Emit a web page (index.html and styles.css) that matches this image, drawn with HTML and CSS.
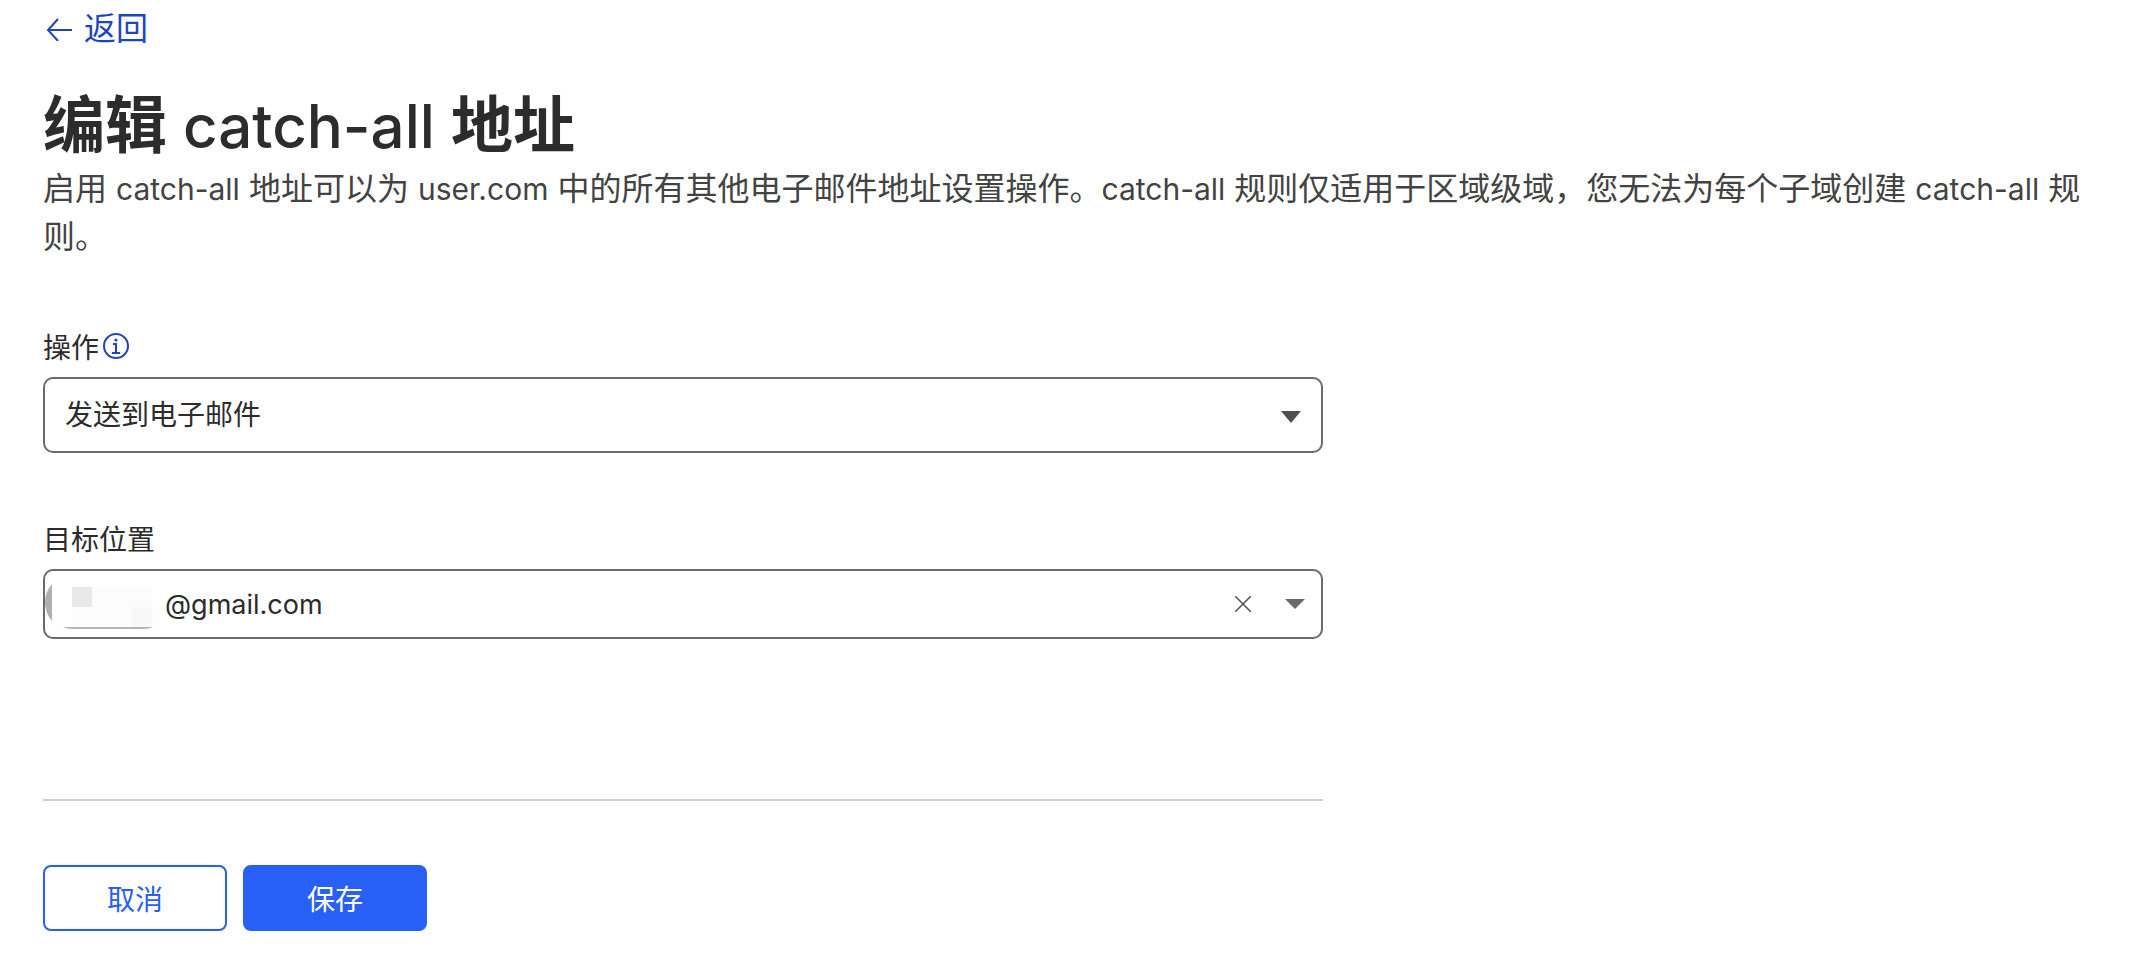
FILE: index.html
```html
<!DOCTYPE html>
<html lang="zh-CN">
<head>
    <meta charset="UTF-8">
    <meta name="viewport" content="width=device-width, initial-scale=1.0">
    <title>编辑 catch-all 地址</title>
    <link rel="stylesheet" href="styles.css">
</head>
<body>
    <main class="page">
        <a class="back-link" href="#">
            <svg class="back-icon" viewBox="0 0 26 24" aria-hidden="true">
                <path d="M26 13H2M12 2L2 13l10 11"/>
            </svg>
            返回
        </a>

        <h1>编辑<span class="latin"> catch-all </span>地址</h1>
        <p class="description">启用 <span class="latin">catch-all</span> 地址可以为 <span class="latin">user.com</span> 中的所有其他电子邮件地址设置操作。<span class="latin">catch-all</span> 规则仅适用于区域级域，您无法为每个子域创建 <span class="latin">catch-all</span> 规则。</p>

        <form class="edit-form">
            <div class="form-group">
                <div class="label-row">
                    <label for="action">操作</label>
                    <button type="button" class="info-button" aria-label="说明">
                        <svg viewBox="0 0 26 26" aria-hidden="true">
                            <circle cx="13" cy="13" r="12"/>
                            <path d="M10 11h3v9M9 20h8"/>
                            <circle class="dot" cx="13" cy="7" r="1.6"/>
                        </svg>
                    </button>
                </div>
                <div class="control">
                    <select id="action" name="action">
                        <option>发送到电子邮件</option>
                    </select>
                    <svg class="caret" viewBox="0 0 20 12" aria-hidden="true"><path d="M0 0h20L10 12z"/></svg>
                </div>
            </div>

            <div class="form-group">
                <div class="label-row">
                    <label for="destination">目标位置</label>
                </div>
                <div class="control combobox">
                    <svg class="masked-name" viewBox="0 0 120 66" aria-hidden="true">
                        <path fill="#b0b0b0" d="M7 13v37Q0 42 0 31 0 21 7 13z"/>
                        <path fill="#fcfcfc" d="M27 16h80v20h13q-3 13-13 20H27z"/>
                        <path fill="#e9e9e9" d="M27 16h20v20H27z"/>
                        <path fill="#f8f8f8" d="M87 36h20v20H87z"/>
                        <path fill="#b4b4b4" d="M18 56h90q-4 2-9 2H28q-6 0-10-2z"/>
                    </svg>
                    <input type="text" id="destination" name="destination" value="@gmail.com">
                    <button type="button" class="clear-button" aria-label="清除">
                        <svg viewBox="0 0 16 16" aria-hidden="true"><path d="M0 0l16 16M16 0L0 16"/></svg>
                    </button>
                    <button type="button" class="toggle-button" aria-label="展开">
                        <svg viewBox="0 0 20 10" aria-hidden="true"><path d="M0 0h20L10 10z"/></svg>
                    </button>
                </div>
            </div>

            <div class="form-actions">
                <button type="button" class="btn btn-secondary">取消</button>
                <button type="submit" class="btn btn-primary">保存</button>
            </div>
        </form>
    </main>
</body>
</html>
```

FILE: styles.css
```css
* {
    margin: 0;
    padding: 0;
    box-sizing: border-box;
}

body {
    font-family: Inter, "Noto Sans CJK SC", sans-serif;
    background: white;
    color: #2c2c2c;
}

button,
input,
select {
    font: inherit;
    color: inherit;
    background: none;
    border: none;
}

button {
    cursor: pointer;
}

svg {
    display: block;
}

.page {
    padding: 4px 43px 38px;
}

.back-link {
    display: inline-flex;
    align-items: center;
    gap: 12px;
    font-size: 32px;
    line-height: 50px;
    color: #1d46bd;
    text-decoration: none;
}

.back-icon {
    width: 26px;
    height: 24px;
    margin-left: 3px;
    fill: none;
    stroke: currentColor;
    stroke-width: 2;
}

h1 {
    margin-top: 36px;
    font-size: 62px;
    font-weight: 600;
    line-height: 72px;
}

h1 .latin {
    font-size: 60px;
    font-weight: 500;
}

.description {
    margin-top: 3px;
    font-size: 32px;
    line-height: 48px;
    color: #434343;
}

.description .latin {
    font-size: 30px;
}

.edit-form {
    max-width: 1280px;
    margin-top: 66px;
}

.form-group {
    margin-bottom: 66px;
    font-size: 28px;
}

.label-row {
    display: flex;
    align-items: center;
    gap: 4px;
    height: 38px;
    margin-bottom: 12px;
}

.info-button {
    width: 26px;
    height: 26px;
}

.info-button svg {
    width: 26px;
    height: 26px;
    fill: none;
    stroke: #1d46bd;
    stroke-width: 2;
}

.info-button .dot {
    fill: #1d46bd;
    stroke: none;
}

.control {
    position: relative;
}

.control select {
    appearance: none;
    width: 100%;
    height: 76px;
    padding: 0 60px 0 20px;
    border: 2px solid #6b6b6b;
    border-radius: 10px;
}

.caret {
    position: absolute;
    top: 34px;
    right: 22px;
    width: 20px;
    height: 12px;
    fill: #4f4f4f;
    pointer-events: none;
}

.combobox {
    display: flex;
    align-items: center;
    height: 70px;
    padding-right: 16px;
    border: 2px solid #6b6b6b;
    border-radius: 10px;
}

.masked-name {
    flex: none;
    width: 120px;
    height: 66px;
}

.combobox input {
    flex: 1;
    min-width: 0;
    font-size: 27px;
    outline: none;
}

.clear-button svg {
    width: 16px;
    height: 16px;
    fill: none;
    stroke: #4f4f4f;
    stroke-width: 1.5;
}

.toggle-button {
    margin-left: 34px;
}

.toggle-button svg {
    width: 20px;
    height: 10px;
    fill: #676b70;
}

.form-actions {
    display: flex;
    gap: 16px;
    margin-top: 160px;
    padding-top: 64px;
    border-top: 2px solid #cfcfcf;
}

.btn {
    width: 184px;
    height: 66px;
    font-size: 28px;
    border: 2px solid #285ff6;
    border-radius: 8px;
}

.btn-secondary {
    color: #285ff6;
}

.btn-primary {
    background: #285ff6;
    color: white;
}
```
